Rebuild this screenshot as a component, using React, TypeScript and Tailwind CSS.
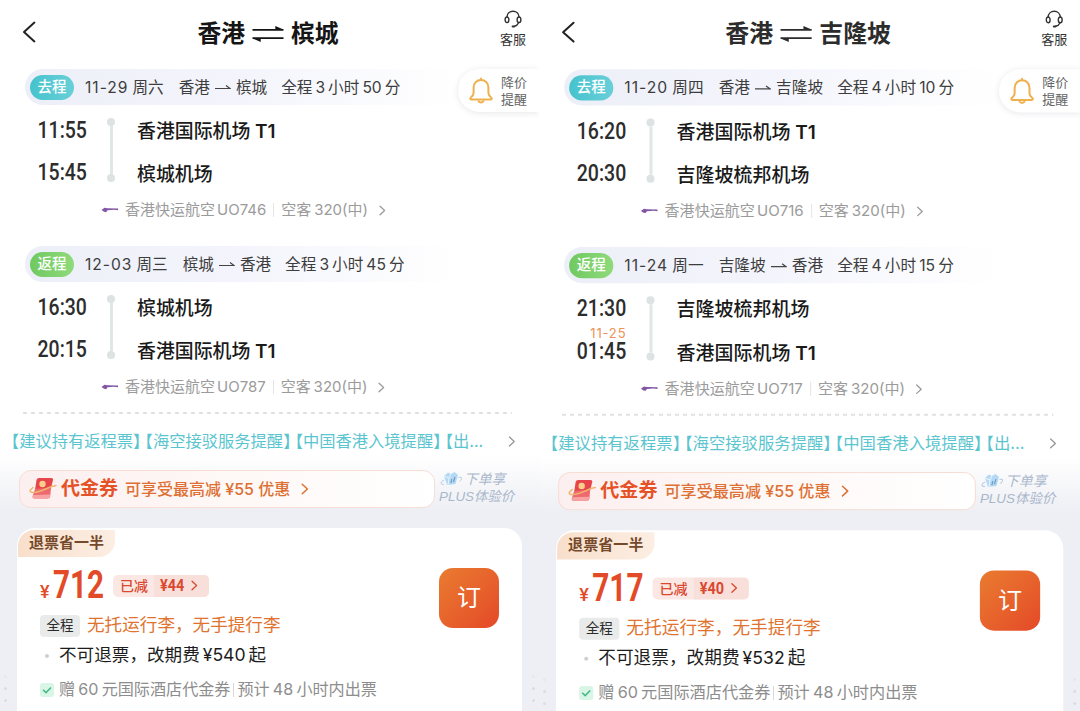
import type { ReactNode } from "react";
import clsx from "clsx";

type Leg = {
  kind: "go" | "back";
  date: string;
  weekday: string;
  from: string;
  to: string;
  duration: string;
  depart: string;
  arrive: string;
  nextDay?: string;
  fromAirport: string;
  toAirport: string;
  flight: string;
};

type Trip = {
  from: string;
  to: string;
  legs: Leg[];
  price: string;
  discount: string;
  changeFee: string;
};

const trips: Trip[] = [
  {
    from: "香港",
    to: "槟城",
    price: "712",
    discount: "¥44",
    changeFee: "¥540",
    legs: [
      {
        kind: "go",
        date: "11-29",
        weekday: "周六",
        from: "香港",
        to: "槟城",
        duration: "全程 3 小时 50 分",
        depart: "11:55",
        arrive: "15:45",
        fromAirport: "香港国际机场 T1",
        toAirport: "槟城机场",
        flight: "UO746",
      },
      {
        kind: "back",
        date: "12-03",
        weekday: "周三",
        from: "槟城",
        to: "香港",
        duration: "全程 3 小时 45 分",
        depart: "16:30",
        arrive: "20:15",
        fromAirport: "槟城机场",
        toAirport: "香港国际机场 T1",
        flight: "UO787",
      },
    ],
  },
  {
    from: "香港",
    to: "吉隆坡",
    price: "717",
    discount: "¥40",
    changeFee: "¥532",
    legs: [
      {
        kind: "go",
        date: "11-20",
        weekday: "周四",
        from: "香港",
        to: "吉隆坡",
        duration: "全程 4 小时 10 分",
        depart: "16:20",
        arrive: "20:30",
        fromAirport: "香港国际机场 T1",
        toAirport: "吉隆坡梳邦机场",
        flight: "UO716",
      },
      {
        kind: "back",
        date: "11-24",
        weekday: "周一",
        from: "吉隆坡",
        to: "香港",
        duration: "全程 4 小时 15 分",
        depart: "21:30",
        arrive: "01:45",
        nextDay: "11-25",
        fromAirport: "吉隆坡梳邦机场",
        toAirport: "香港国际机场 T1",
        flight: "UO717",
      },
    ],
  },
];

function Chevron({ className }: { className?: string }) {
  return (
    <svg viewBox="0 0 8 12" fill="none" stroke="currentColor" strokeWidth="1.5" className={clsx("shrink-0", className)}>
      <path d="M1.2 1.2 6.4 6 1.2 10.8" strokeLinecap="round" strokeLinejoin="round" />
    </svg>
  );
}

function Headset() {
  return (
    <svg viewBox="0 0 18 18" fill="none" stroke="#333" strokeWidth="1.4" strokeLinecap="round" className="h-[18px] w-[18px]">
      <path d="M2.9 7.2C3.1 3.6 5.6 1.2 9 1.2s5.900 2.400 6.100 6" />
      <ellipse cx="3" cy="9.8" rx="1.9" ry="2.8" />
      <ellipse cx="15" cy="9.8" rx="1.9" ry="2.8" />
      <path d="M14.6 12.8c-.8 2-2.300 3-4.200 3.400" />
      <path d="M8.6 16.4h1.6" strokeWidth="2" />
    </svg>
  );
}

function Bell() {
  return (
    <svg viewBox="0 0 24 27" fill="none" stroke="#efb04f" strokeWidth="2" strokeLinecap="round" strokeLinejoin="round" className="h-[27px] w-6">
      <path d="M12 1.400V3" />
      <path d="M12 3C7.600 3 4.600 6.300 4.600 10.500v5.500c0 1.600-.8 2.700-2.800 4.600-.9.900-.5 1.900.5 1.900h19.400c1 0 1.400-1 .5-1.900-2-1.900-2.800-3-2.800-4.600v-5.500C19.400 6.300 16.400 3 12 3Z" />
      <path d="M9.600 24.200c.5.900 1.400 1.300 2.400 1.300s1.900-.4 2.400-1.300" />
    </svg>
  );
}

function Header({ trip }: { trip: Trip }) {
  return (
    <header className="flex h-[69px] items-start justify-between pr-[13px] pl-[22px]">
      <svg viewBox="0 0 14 22" fill="none" stroke="#222" strokeWidth="2" className="mt-[21px] h-[22px] w-3.5">
        <path d="M12.4 1.6 2 11l10.4 9.4" strokeLinecap="round" strokeLinejoin="round" />
      </svg>
      <div className={clsx("mt-4 flex h-9 items-center gap-[7px] text-[23.8px] font-bold", trip.to === "槟城" ? "text-[#151515]" : "text-[#2c2c2c]")}>
        <span>{trip.from}</span>
        <svg viewBox="0 0 32 18" fill="currentColor" className="h-[18px] w-8">
          <path d="M.5 4h22.800V1l7 3h1.200v1.700H.5ZM31.500 13.900H8.700v3l-7-3H.5v-1.700h31Z" />
        </svg>
        <span>{trip.to}</span>
      </div>
      <div className="mt-2.5 flex flex-col items-center text-[13px] leading-[22px] text-[#333]">
        <Headset />
        客服
      </div>
    </header>
  );
}

function PriceAlert() {
  return (
    <div className="flex h-[43px] w-[81px] shrink-0 items-center gap-2 rounded-l-full bg-white pl-[11px] text-[13px] leading-[16.5px] text-[#666] shadow-[0_1px_6px_rgba(60,60,90,0.12)]">
      <Bell />
      <span className="w-[27px]">
        降价
        <br />
        提醒
      </span>
    </div>
  );
}

function Time({ children }: { children: ReactNode }) {
  return (
    <span className="flex h-[42px] origin-right scale-x-[.81] items-center font-[Roboto] text-[24px] font-medium text-[#2d2d2d]">
      {children}
    </span>
  );
}

function LegBlock({ leg }: { leg: Leg }) {
  const go = leg.kind === "go";
  return (
    <section className="h-[177px]">
      <div className="flex h-9 items-start justify-between pl-[25px]">
        <div className="flex h-9 w-[433px] items-center rounded-l-full bg-linear-to-r from-[#edeff8] via-[#f4f5fc] to-white pl-[5px] text-[15.6px] whitespace-nowrap text-[#3d3d3d]">
          <span
            className={clsx(
              "flex h-[25px] w-11 items-center justify-center rounded-full text-[14.5px] font-medium text-white",
              go ? "bg-linear-to-r from-[#45c3cd] to-[#68cfd8]" : "bg-linear-to-r from-[#70c960] to-[#8fda7c]",
            )}
          >
            {go ? "去程" : "返程"}
          </span>
          <span className="mt-px ml-[11px] tracking-[1px]">{leg.date}</span>
          <span className="mt-px ml-1">{leg.weekday}</span>
          <span className="mt-px ml-[15px]">{leg.from}</span>
          <svg viewBox="0 0 16 6" className="mx-[5px] h-1.5 w-4" fill="none" stroke="#444" strokeWidth="1.2">
            <path d="M0 4.500h15L11 1.600" />
          </svg>
          <span className="mt-px">{leg.to}</span>
          <span className="mt-px ml-[14px] [word-spacing:-1.3px]">{leg.duration}</span>
        </div>
        {go && <PriceAlert />}
      </div>
      <div className="flex h-[93px] pt-1">
        <div className="relative flex w-[87px] flex-col items-end">
          <Time>{leg.depart}</Time>
          <Time>{leg.arrive}</Time>
          {leg.nextDay && (
            <span className="absolute top-[38px] right-0 text-[13px] leading-4 tracking-[.8px] text-[#ee9154]">{leg.nextDay}</span>
          )}
        </div>
        <div className="mt-[9px] ml-5 flex h-[64px] w-2 flex-col items-center">
          <i className="size-2 rounded-full bg-[#dde2e3]" />
          <i className="w-[3px] flex-1 bg-[#e1e6e8]" />
          <i className="size-2 rounded-full bg-[#dde2e3]" />
        </div>
        <div className="mt-[.5px] ml-[22px] text-[18.9px] leading-[43.5px] font-medium text-[#1a1a1a]">
          {[leg.fromAirport, leg.toAirport].map((airport) => {
            const [name, terminal] = airport.split(" ");
            return (
              <p key={airport}>
                {name}
                {terminal && <span className="font-semibold"> {terminal}</span>}
              </p>
            );
          })}
        </div>
      </div>
      <div className="flex h-6 items-center pl-[101px] text-[15px] whitespace-nowrap text-[#9b9b9b]">
        <svg viewBox="0 0 18 6" className="mr-1.5 h-1.5 w-[18px]">
          <path d="M.5 3 3.500.8 6.500 1.300 17 1.600v1.700l-4-.5-6.500.5L5.200 5.200 3 4.800Z" fill="#8257a6" />
        </svg>
        <span>香港快运航空</span>
        <span className="ml-0.5">{leg.flight}</span>
        <i className="mx-[7px] h-3.5 w-px bg-[#e4e4e4]" />
        <span className="[word-spacing:-1.3px]">空客 320(中)</span>
        <Chevron className="ml-[11px] h-[11px] w-[7px]" />
      </div>
    </section>
  );
}

function Notices() {
  return (
    <div className="flex h-14 items-center justify-between pr-[23px] pl-[11px] text-[16.3px] text-[#5bc5cf]">
      <p className="flex gap-[3.5px] whitespace-nowrap [font-feature-settings:'halt']">
        <span>【建议持有返程票】</span>
        <span>【海空接驳服务提醒】</span>
        <span>【中国香港入境提醒】</span>
        <span>【出...</span>
      </p>
      <Chevron className="h-[11px] w-2 text-[#999]" />
    </div>
  );
}

function Voucher() {
  return (
    <div className="flex h-[38px] pl-[19px]">
      <div className="flex w-[416px] items-center rounded-xl border border-[#f8ddd5] bg-linear-to-r from-[#fcefef] via-[#fef8f6] to-white pl-[9px] whitespace-nowrap">
        <svg viewBox="0 0 28 24" className="h-6 w-7">
          <path d="M10 1h12q2.500 0 2 2l-2.500 10H6L7.500 3Q8 1 10 1Z" fill="#e6454b" />
          <path d="m6 12 16-1.500-.8 9q-.4 2-2.400 2H5.500q-2.500 0-1.800-2.500Z" fill="#ee6a6e" />
          <path d="m4.200 18 17-.5-.4 2.200q-.4 1.800-2.200 1.800H5.500q-2.300 0-1.300-3.500Z" fill="#f7a3a3" />
          <path d="M4 10.500C-2 15 2 16.500 10 14.500s9-5 17-6" fill="none" stroke="#efb66d" strokeWidth="1.500" strokeLinecap="round" />
          <circle cx="13.500" cy="7" r="3.200" fill="#f9cd8a" />
        </svg>
        <span className="mt-0.5 ml-1 text-[19px] font-bold text-[#e65227]">代金券</span>
        <span className="ml-[7px] text-[16px] font-medium text-[#dd7032]">可享受最高减 ¥55 优惠</span>
        <Chevron className="ml-[11px] h-3 w-2 text-[#dd7032]" />
      </div>
      <div className="ml-1 flex flex-col text-[13.4px] leading-[17px] whitespace-nowrap text-[#a9b7cb] italic">
        <span className="mt-px flex items-center">
          <svg viewBox="0 0 24 16" className="mr-px h-4 w-6">
            <path d="m5 5 4-3.500 3 1.500 3.500-2L19 4l-2.500 9L8 14Z" fill="#b5d9f4" />
            <path d="m5 5 5 2 2-4M10 7l-1 7" stroke="#e4f4ff" fill="none" />
            <path d="m12 12 .8-4M14.500 11l1.500-5" stroke="#6c9dc9" strokeWidth="1.200" />
            <path d="M5 9c-4 2-4 4.500 0 4.500M19.500 6.500c4-1 4 1 1 4" stroke="#b3cbe3" fill="none" />
          </svg>
          <span className="text-[13.8px]">下单享</span>
        </span>
        <span className="font-['Liberation_Sans','Noto_Sans_CJK_SC',sans-serif]">PLUS体验价</span>
      </div>
    </div>
  );
}

function FareCard({ trip }: { trip: Trip }) {
  return (
    <div className="mt-5 ml-[17px] flex h-[190px] w-[505px] justify-between rounded-t-[18px] bg-white pt-0.5 pl-px whitespace-nowrap">
      <div>
        <div className="flex h-[27px] w-[97px] items-center rounded-tl-[16px] rounded-br-[16px] bg-linear-to-r from-[#f8dfcb] to-[#fceee3] pl-[11px] text-[15px] font-bold text-[#75492a]">
          退票省一半
        </div>
        <div className="flex h-[58px] items-center pl-[22px]">
          <span className="mt-[11px] w-[13px] font-[Roboto] text-[18px] font-medium text-[#e34a27]">¥</span>
          <span className="w-[60px] origin-left scale-x-[.78] font-[Roboto] text-[38px] font-bold text-[#e34a27]">{trip.price}</span>
          <div className="flex h-[22px] w-24 overflow-hidden rounded-[5px] bg-[#fbe8e5] text-[14px] leading-[22px] text-[#d9492f]">
            <span className="w-[41px] pl-[7px] font-medium">已减</span>
            <span className="flex flex-1 items-center bg-[#f9dfda] pl-1.5">
              <b className="w-[31px] origin-left scale-x-[.9] font-[Roboto] text-[16px]">{trip.discount}</b>
              <Chevron className="h-[11px] w-[7px]" />
            </span>
          </div>
        </div>
        <div className="flex h-[22px] items-center pl-[22px]">
          <span className="flex h-[22px] w-10 items-center justify-center rounded bg-[#e9eaea] text-[13.5px] text-[#2c2c2c]">全程</span>
          <span className="ml-[7px] text-[17.6px] text-[#e0742f]">无托运行李，无手提行李</span>
        </div>
        <div className="flex h-[38px] items-center pl-[27px] text-[17.6px] text-[#1d1d1d] [word-spacing:-2px]">
          <i className="mr-2.5 size-1 rounded-full bg-[#cfcfcf]" />
          不可退票，改期费 {trip.changeFee} 起
        </div>
        <div className="flex h-[30px] items-center pl-[22px] text-[16.1px] text-[#8d8d8d] [word-spacing:-1.3px]">
          <span className="mr-[5px] flex size-3.5 items-center justify-center rounded-[3px] bg-[#d8f5e6]">
            <svg viewBox="0 0 10 8" fill="none" stroke="#45b987" strokeWidth="1.5" className="h-2 w-2.5">
              <path d="m1 3.8 3 2.8L9 1.5" />
            </svg>
          </span>
          <span>赠 60 元国际酒店代金券</span>
          <i className="mx-[3px] h-3.5 w-px bg-[#d8d8d8]" />
          <span>预计 48 小时内出票</span>
        </div>
      </div>
      <button className="mt-[38.5px] mr-[23px] flex size-[60px] items-center justify-center rounded-[14px] bg-linear-to-br from-[#e97b30] to-[#e44828] text-[24px] text-white">
        订
      </button>
    </div>
  );
}

// Faint dotted texture visible in the gutters beside the fare card
function GutterDots({ className }: { className: string }) {
  return (
    <div className={clsx("absolute flex flex-col gap-[9px]", className)}>
      <i className="size-[3px] rounded-full bg-[#e6e7eb]" />
      <i className="size-[3px] rounded-full bg-[#dcdde2]" />
      <i className="size-[3px] rounded-full bg-[#dcdde2]" />
    </div>
  );
}

function TripPanel({ trip, className }: { trip: Trip; className?: string }) {
  return (
    <div className={clsx("relative h-[711px] w-[539px] overflow-hidden bg-linear-to-b from-white from-[455px] to-[#eeeff4] to-[510px]", className)}>
      <Header trip={trip} />
      <div className="h-[344px]">
        {trip.legs.map((leg) => (
          <LegBlock key={leg.kind} leg={leg} />
        ))}
      </div>
      <div className="-mt-px mr-[27px] ml-[23px] h-[1.5px] bg-[repeating-linear-gradient(90deg,#e2e2e2_0_4px,transparent_4px_8px)]" />
      <Notices />
      <Voucher />
      <FareCard trip={trip} />
      <GutterDots className="top-[675px] left-1" />
      <GutterDots className="top-[675px] right-1" />
    </div>
  );
}

export default function App() {
  return (
    <main className="grid h-[711px] w-[1080px] grid-cols-[539px_541px] overflow-hidden bg-white font-['Inter','Noto_Sans_CJK_SC',sans-serif]">
      <TripPanel trip={trips[0]} />
      <TripPanel trip={trips[1]} className="origin-top-left scale-[1.0043]" />
    </main>
  );
}
